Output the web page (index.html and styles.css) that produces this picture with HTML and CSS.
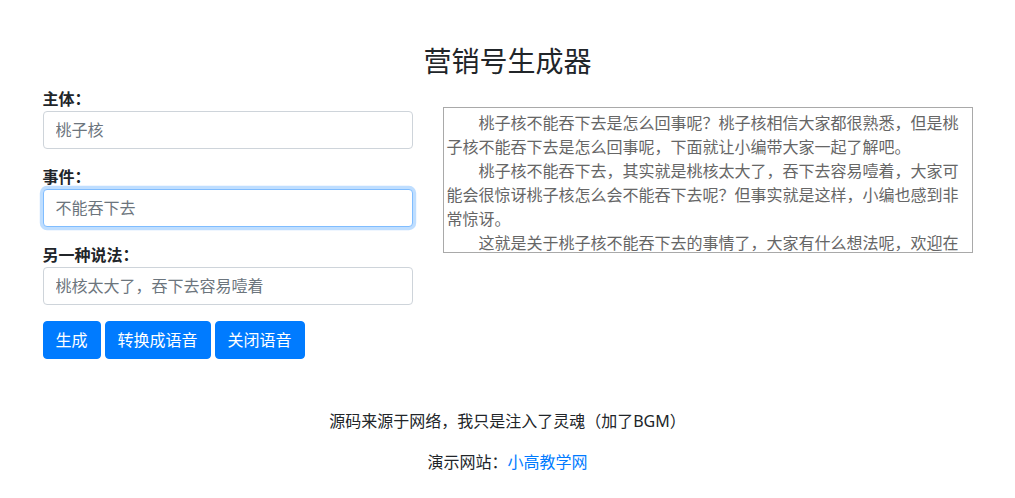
FILE: index.html
```html
<!DOCTYPE html>
<html lang="zh-CN">
<head>
<meta charset="utf-8">
<title>营销号生成器</title>
<link rel="stylesheet" href="styles.css">
</head>
<body>
<div class="container">
  <h3 class="title">营销号生成器</h3>
  <div class="row">
    <div class="col-left">
      <div class="form-group">
        <label class="label">主体：</label>
        <input class="form-control" type="text" placeholder="桃子核">
      </div>
      <div class="form-group">
        <label class="label">事件：</label>
        <input class="form-control is-focused" type="text" placeholder="不能吞下去">
      </div>
      <div class="form-group">
        <label class="label">另一种说法：</label>
        <input class="form-control" type="text" placeholder="桃核太大了，吞下去容易噎着">
      </div>
      <div class="btns">
        <button class="btn">生成</button>
        <button class="btn">转换成语音</button>
        <button class="btn">关闭语音</button>
      </div>
    </div>
    <div class="col-right">
      <textarea class="result">　　桃子核不能吞下去是怎么回事呢？桃子核相信大家都很熟悉，但是桃子核不能吞下去是怎么回事呢，下面就让小编带大家一起了解吧。
　　桃子核不能吞下去，其实就是桃核太大了，吞下去容易噎着，大家可能会很惊讶桃子核怎么会不能吞下去呢？但事实就是这样，小编也感到非常惊讶。
　　这就是关于桃子核不能吞下去的事情了，大家有什么想法呢，欢迎在评论区告诉小编一起讨论哦！</textarea>
    </div>
  </div>
  <div class="footer">
    <p class="note">源码来源于网络，我只是注入了灵魂（加了BGM）</p>
    <p class="note">演示网站：<a class="link" href="#">小高教学网</a></p>
  </div>
</div>
</body>
</html>
```

FILE: styles.css
```css
* { box-sizing: border-box; }
html, body {
  margin: 0;
  padding: 0;
  background: #fff;
}
body {
  font-family: "Noto Sans", "Noto Sans CJK SC", sans-serif;
  font-size: 16px;
  line-height: 1.5;
  color: #212529;
}
.container {
  width: 960px;
  margin: 0 auto;
  padding: 45px 15px 0;
}
.title {
  margin: 0 0 8px;
  font-size: 28px;
  font-weight: 400;
  line-height: 1.2;
  text-align: center;
}
.row {
  display: grid;
  grid-template-columns: 370px 530px;
  column-gap: 30px;
}
.form-group {
  margin-bottom: 16px;
}
.label {
  display: block;
  font-weight: 700;
  line-height: 24px;
  height: 24px;
}
.form-control {
  display: block;
  width: 100%;
  height: 38px;
  padding: 6px 12px;
  font: inherit;
  font-size: 16px;
  line-height: 1.5;
  color: #495057;
  background: #fff;
  border: 1px solid #ced4da;
  border-radius: 4px;
  outline: none;
}
.form-control::placeholder {
  color: #6c757d;
  opacity: 1;
}
.form-control.is-focused {
  border-color: #80bdff;
  box-shadow: 0 0 0 3.2px rgba(0, 123, 255, 0.25);
}
.btns {
  display: flex;
  gap: 4px;
}
.btn {
  height: 38px;
  padding: 6px 12px;
  font: inherit;
  font-size: 16px;
  line-height: 1.5;
  color: #fff;
  background: #007bff;
  border: 1px solid #007bff;
  border-radius: 4px;
}
.result {
  display: block;
  margin-top: 20px;
  width: 530px;
  height: 146px;
  padding: 3px;
  font: inherit;
  font-size: 16px;
  line-height: 24px;
  color: #666;
  border: 1px solid #a9a9a9;
  border-radius: 0;
  resize: none;
  overflow: hidden;
  outline: none;
}
.footer {
  margin-top: 50px;
  text-align: center;
}
.note {
  margin: 0 0 17px;
}
.link {
  color: #007bff;
  text-decoration: none;
}
```
